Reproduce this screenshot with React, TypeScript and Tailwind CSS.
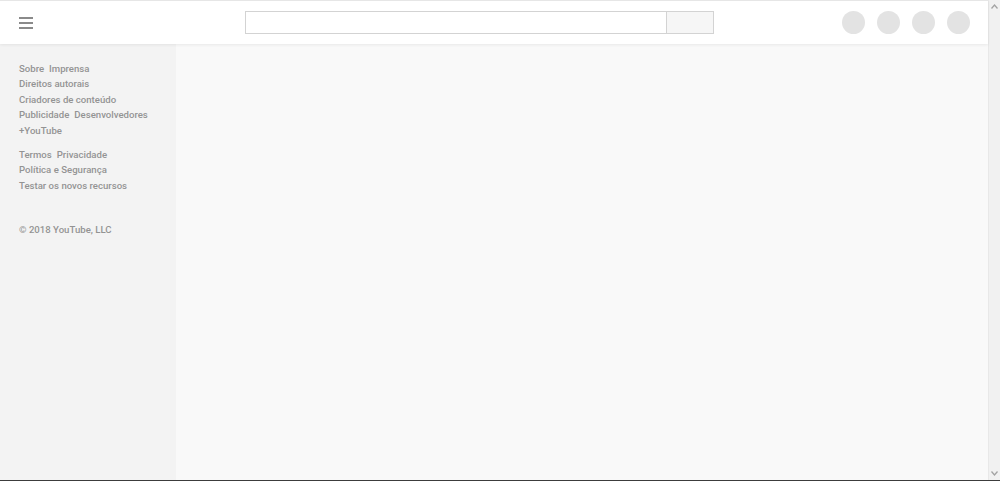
export default function App() {
  const font = { fontFamily: "Roboto, 'Noto Sans', Arial, sans-serif" };

  return (
    <div className="w-[1000px] h-[481px] flex flex-col bg-white overflow-hidden" style={font}>
      <div className="flex-1 flex min-h-0">
        <div className="flex-1 flex flex-col min-w-0">
          {/* Header */}
          <header className="h-[44px] shrink-0 bg-white border-t border-[#e6e6e6] flex items-center relative z-10 shadow-[0_1px_3px_rgba(0,0,0,0.07)]">
            <button className="ml-[19px] w-[14px] flex flex-col gap-[3px]">
              <span className="block h-[2px] bg-[#8a8a8a]" />
              <span className="block h-[2px] bg-[#8a8a8a]" />
              <span className="block h-[2px] bg-[#8a8a8a]" />
            </button>
            <div className="ml-[212px] flex h-[23px]">
              <input className="w-[422px] h-full border border-[#d3d3d3] bg-white outline-none" />
              <div className="w-[47px] h-full border border-l-0 border-[#d3d3d3] bg-[#f6f6f6]" />
            </div>
            <div className="ml-auto mr-[18px] flex gap-[12px]">
              <div className="w-[23px] h-[23px] rounded-full bg-[#e3e3e3]" />
              <div className="w-[23px] h-[23px] rounded-full bg-[#e3e3e3]" />
              <div className="w-[23px] h-[23px] rounded-full bg-[#e3e3e3]" />
              <div className="w-[23px] h-[23px] rounded-full bg-[#e3e3e3]" />
            </div>
          </header>

          <div className="flex-1 flex min-h-0">
            {/* Sidebar */}
            <aside className="w-[176px] shrink-0 bg-[#f3f3f3] pl-[19px] pt-[17px] text-[9.6px] font-medium text-[#939393] leading-[15.4px]">
              <div className="flex gap-[5px]"><span>Sobre</span><span>Imprensa</span></div>
              <div>Direitos autorais</div>
              <div>Criadores de conteúdo</div>
              <div className="flex gap-[5px]"><span>Publicidade</span><span>Desenvolvedores</span></div>
              <div>+YouTube</div>
              <div className="mt-[9px] flex gap-[5px]"><span>Termos</span><span>Privacidade</span></div>
              <div>Política e Segurança</div>
              <div>Testar os novos recursos</div>
              <div className="mt-[29px]">© 2018 YouTube, LLC</div>
            </aside>
            {/* Main */}
            <main className="flex-1 bg-[#f9f9f9]" />
          </div>
        </div>

        {/* Scrollbar */}
        <div className="w-[12px] shrink-0 bg-[#f1f1f1] border-l border-[#e8e8e8] flex flex-col justify-between items-center py-[4px]">
          <svg width="7" height="5" viewBox="0 0 7 5"><path d="M0.5 4.5 L3.5 1 L6.5 4.5" fill="none" stroke="#a3a3a3" strokeWidth="1.3" /></svg>
          <svg width="7" height="5" viewBox="0 0 7 5"><path d="M0.5 0.5 L3.5 4 L6.5 0.5" fill="none" stroke="#a3a3a3" strokeWidth="1.3" /></svg>
        </div>
      </div>
      <div className="h-px bg-[#3c3c3c] shrink-0" />
    </div>
  );
}
